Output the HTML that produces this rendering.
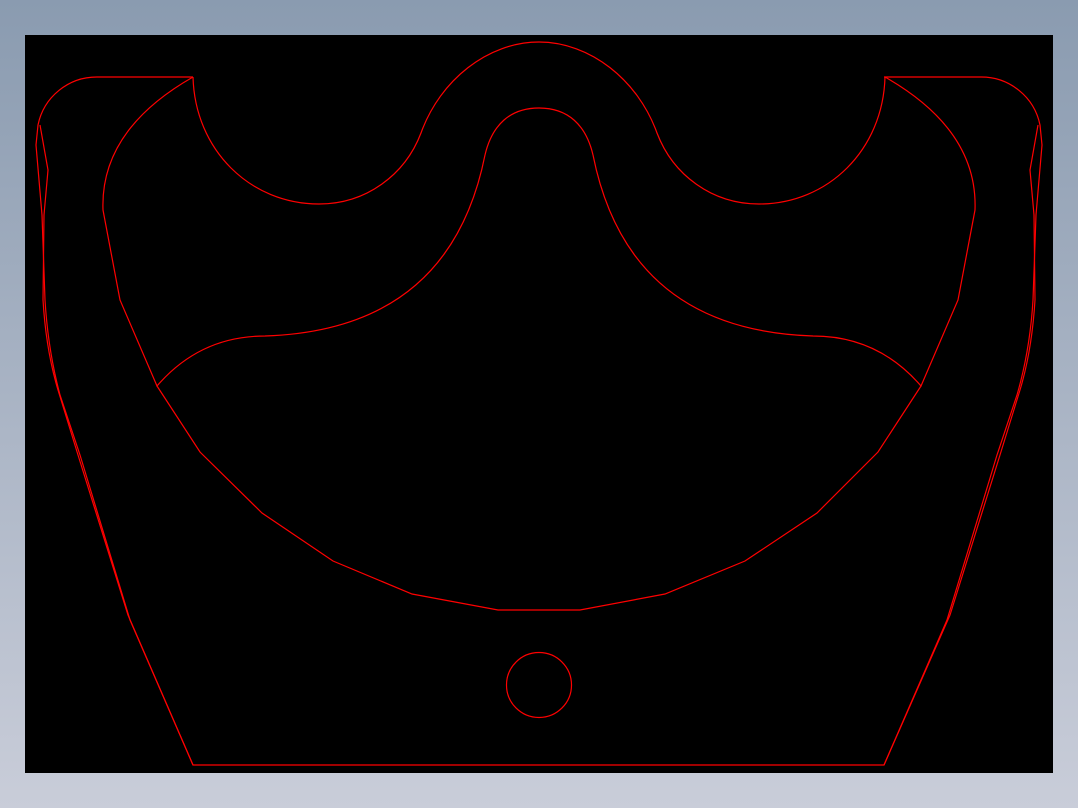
<!DOCTYPE html>
<html><head><meta charset="utf-8"><style>
html,body{margin:0;padding:0;width:1078px;height:808px;overflow:hidden;background:linear-gradient(#8a9bb0,#c9cdd9);}
svg{position:absolute;left:0;top:0}
</style></head><body>
<svg width="1078" height="808" viewBox="0 0 1078 808">
<rect x="25" y="35" width="1028" height="738" fill="#000"/>
<g fill="none" stroke="#ff0000" stroke-width="1.2">
<path d="M193,77 L97,77 A60,60 0 0 0 38,125 L36,145 L42,215 L45,300 Q48,350 60,395 L80,455 L130,620 L193,765 L884,765 L947,620 L997,455 L1017,395 Q1030,350 1033,300 L1036,215 L1042,145 L1040,125 A60,60 0 0 0 981,77 L884,77"/>
<path d="M40,125 L48,170 L44,215 L43,300 Q46,350 58,390 L78,455 L128,615 L193,765"/>
<path d="M1038,125 L1030,170 L1034,215 L1035,300 Q1032,350 1020,390 L1000,455 L950,615 L884,765"/>
<path d="M193,77 C195,150 250,204 319,204 C366,204 405,175 421,133 C440,80 488,42 539,42 C590,42 638,80 657,133 C673,175 712,204 759,204 C828,204 883,150 885,77"/>
<path d="M485,155 C492,125 510,108 539,108 C568,108 586,125 593,155"/>
<path d="M193,77 Q100,130 103,210 L120,300 L157,386 Q200,336 265,336 Q450,330 485,155"/>
<path d="M885,77 Q978,130 975,210 L958,300 L921,386 Q878,336 813,336 Q628,330 593,155"/>
<path d="M157,386 L200,452 L262,513 L333,561 L412,594 L498,610 L580,610 L665,594 L745,561 L817,513 L878,452 L921,386"/>
<circle cx="539" cy="685" r="32.5"/>
</g>
</svg>
</body></html>
